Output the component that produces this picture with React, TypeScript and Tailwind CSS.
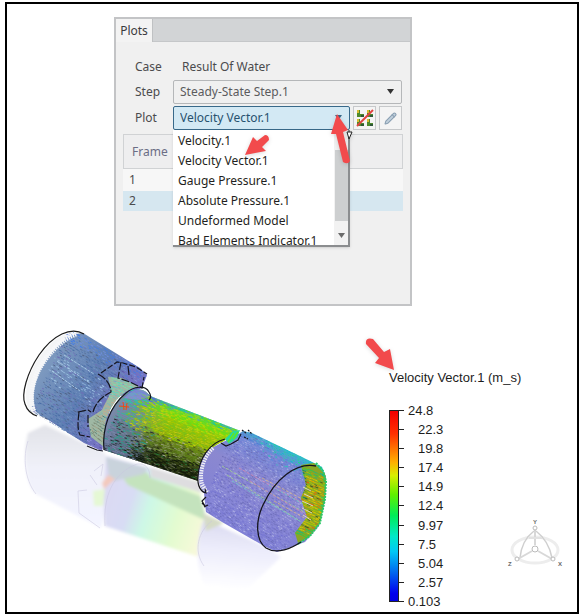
import React from 'react';
import { Pencil } from 'lucide-react';

const PLOTS = [
  'Velocity.1',
  'Velocity Vector.1',
  'Gauge Pressure.1',
  'Absolute Pressure.1',
  'Undeformed Model',
  'Bad Elements Indicator.1',
];

const LEGEND = ['24.8', '22.3', '19.8', '17.4', '14.9', '12.4', '9.97', '7.5', '5.04', '2.57', '0.103'];

type Point = [number, number];
type Dash = { x: number; y: number; dx: number; dy: number; color: string; width: number };

// Small seeded generator so the vector field is the same on every render
const makeRandom = (seed: number) => () => {
  seed = (seed * 1664525 + 1013904223) % 4294967296;
  return seed / 4294967296;
};

// Fills the quad [topLeft, topRight, bottomLeft, bottomRight] with rows of short vectors
const makeField = (
  quad: Point[],
  rows: number,
  cols: number,
  length: number,
  seed: number,
  pick: (u: number, v: number, r: number) => string,
): Dash[] => {
  const random = makeRandom(seed);
  const [tl, tr, bl, br] = quad;
  const dashes: Dash[] = [];
  for (let i = 0; i < rows; i++) {
    for (let j = 0; j < cols; j++) {
      const v = (i + random() * 0.5) / rows;
      const u = (j + (i % 2) * 0.5 + random() * 0.3) / cols;
      const at = (k: 0 | 1) =>
        tl[k] * (1 - u) * (1 - v) + tr[k] * u * (1 - v) + bl[k] * (1 - u) * v + br[k] * u * v;
      const dirX = (tr[0] - tl[0]) * (1 - v) + (br[0] - bl[0]) * v;
      const dirY = (tr[1] - tl[1]) * (1 - v) + (br[1] - bl[1]) * v;
      const norm = Math.hypot(dirX, dirY);
      const len = length * (0.6 + random() * 0.8);
      // jitter the colour lookup so neighbouring bands blend into each other
      const ju = u + (random() - 0.5) * 0.22;
      const jv = v + (random() - 0.5) * 0.12;
      dashes.push({
        x: at(0),
        y: at(1),
        dx: (dirX / norm) * len,
        dy: (dirY / norm) * len,
        color: pick(ju, jv, random()),
        width: 0.6 + random() * 0.5,
      });
    }
  }
  return dashes;
};

const inletField = makeField([[68, 328], [150, 372], [28, 412], [106, 454]], 42, 26, 2.4, 7, (u, v, r) => {
  if (v < 0.1) return r < 0.6 ? '#3f7ae8' : '#6f8fe0';
  if (u > 0.74) return r < 0.5 ? '#7367cf' : r < 0.75 ? '#5a54a6' : '#8e90dc';
  if (v > 0.35 && v < 0.55 && r < 0.35) return '#a2c6e6';
  return r < 0.4 ? '#4a6da6' : r < 0.7 ? '#7391be' : r < 0.85 ? '#6d6fb6' : '#526488';
});

const pipeField = makeField([[128, 386], [240, 427], [98, 448], [202, 484]], 42, 48, 3.2, 19, (u, v, r) => {
  if (v < 0.05) return u < 0.3 ? '#506de0' : r < 0.6 ? '#1fc99a' : '#4f9fd0';
  if (v < 0.22) return u < 0.18 ? (r < 0.5 ? '#6f7edc' : '#26c4b4') : r < 0.5 ? '#63df18' : '#b4dd05';
  if (v < 0.5) return u < 0.18 ? (r < 0.5 ? '#7186b5' : '#39b59a') : r < 0.45 ? '#a5c800' : r < 0.75 ? '#7bc51a' : '#c9cf13';
  if (u < 0.3) return r < 0.35 ? '#617192' : r < 0.5 ? '#292f39' : r < 0.8 ? '#7781aa' : '#23a28d';
  if (v < 0.74) return r < 0.4 ? '#60841d' : r < 0.65 ? '#829457' : r < 0.85 ? '#414d20' : '#a2aa94';
  return r < 0.5 ? '#11190c' : r < 0.75 ? '#37451a' : r < 0.9 ? '#656d52' : '#257038';
});

const outletField = makeField([[234, 424], [328, 468], [200, 508], [282, 554]], 44, 36, 2, 31, (u, v, r) => {
  if (v < 0.06) return u < 0.4 ? '#4f73d8' : r < 0.5 ? '#14b9cc' : '#1ed690';
  if (v < 0.15 && u > 0.4) return r < 0.5 ? '#30c5b2' : '#548bdc';
  return r < 0.3 ? '#6e6fba' : r < 0.6 ? '#9090da' : r < 0.8 ? '#adafe3' : '#7272d0';
});

const jetField = makeField([[298, 464], [327, 475], [284, 528], [318, 544]], 28, 12, 4, 43, (u, v, r) => {
  if (v < 0.08 || v > 0.88) return r < 0.5 ? '#16b98b' : '#39c93b';
  if (u < 0.25) return r < 0.3 ? '#127b78' : r < 0.6 ? '#26a577' : r < 0.8 ? '#8b8ad4' : '#334868';
  if (u > 0.9) return '#2ad45f';
  return r < 0.35 ? '#dcc400' : r < 0.6 ? '#a1c800' : r < 0.75 ? '#d39a00' : r < 0.92 ? '#4c5a1c' : '#e26308';
});

const throatField = makeField([[111, 376], [138, 384], [88, 432], [104, 444]], 24, 12, 2.4, 57, (u, v, r) => {
  if (v < 0.3) return r < 0.5 ? '#79dfb1' : r < 0.8 ? '#52d8c4' : '#74a6c8';
  if (v < 0.65) return r < 0.4 ? '#c6a991' : r < 0.7 ? '#8fc5a4' : '#72b8bd';
  return r < 0.5 ? '#7d8b76' : r < 0.8 ? '#a59d83' : '#4c7d79';
});

const INLET =
  'M83 332 C72 328 57 334 44 350 C31 366 23 388 27 403 C29 409 32 412 37 414 L84 442 L102 450 L112 398 L142 387 L147 374 L140 367 Z';
const PIPE = 'M104 449 C102 428 109 405 126 392 C132 387 144 386 150 395 L238 429 L224 440 C207 447 198 462 198 480 L150 464 Z';
const OUTLET =
  'M225 440 L234 436 L243 430 L252 432 L302 456 L322 466 L326 476 L325 500 L319 525 L305 541 L277 551 L264 545 L222 521 L206 511 L204 492 C195 478 197 462 208 449 Z';
const THROAT = 'M108 376 L122 377 L139 386 C125 387 110 401 105 424 L104 446 L91 436 L88 418 L102 409 L111 391 Z';
const JET = 'M301 464 L314 462 L325 473 L326 480 L325 498 L320 522 L309 536 L298 542 L295 532 L307 516 L301 497 L306 484 Z';

const Field: React.FC<{ dashes: Dash[] }> = ({ dashes }) => (
  <>
    {dashes.map((d, i) => (
      <path
        key={i}
        d={`M${d.x.toFixed(1)} ${d.y.toFixed(1)}l${d.dx.toFixed(1)} ${d.dy.toFixed(1)}`}
        stroke={d.color}
        strokeWidth={d.width}
      />
    ))}
  </>
);

const FlowModel: React.FC = () => (
  <svg className="w-[343px] shrink-0" viewBox="7 306 343 304" fill="none" role="img" aria-label="Velocity vectors in the pipe">
    <defs>
      <linearGradient id="inlet" gradientUnits="userSpaceOnUse" x1="50" y1="350" x2="135" y2="405">
        <stop offset="0" stopColor="#7f9bc0" />
        <stop offset="0.5" stopColor="#5e7fb4" />
        <stop offset="1" stopColor="#7a71c4" />
      </linearGradient>
      <linearGradient id="pipe" gradientUnits="userSpaceOnUse" x1="190" y1="409" x2="166" y2="470">
        <stop offset="0" stopColor="#35c789" />
        <stop offset="0.15" stopColor="#8fd60c" />
        <stop offset="0.45" stopColor="#87a812" />
        <stop offset="0.75" stopColor="#425217" />
        <stop offset="1" stopColor="#0b1206" />
      </linearGradient>
      <linearGradient id="pipeShade" gradientUnits="userSpaceOnUse" x1="103" y1="420" x2="160" y2="442">
        <stop offset="0" stopColor="#7b87b8" />
        <stop offset="0.5" stopColor="#6d87a0" stopOpacity="0.7" />
        <stop offset="1" stopColor="#6d87a0" stopOpacity="0" />
      </linearGradient>
      <linearGradient id="outlet" gradientUnits="userSpaceOnUse" x1="285" y1="447" x2="240" y2="530">
        <stop offset="0" stopColor="#2ebfc9" />
        <stop offset="0.12" stopColor="#7188d6" />
        <stop offset="0.4" stopColor="#8b88d0" />
        <stop offset="1" stopColor="#8080d6" />
      </linearGradient>
      <linearGradient id="fadeLeft" gradientUnits="userSpaceOnUse" x1="60" y1="430" x2="60" y2="520">
        <stop offset="0" stopColor="#e3e4ea" />
        <stop offset="0.4" stopColor="#f0f1f9" />
        <stop offset="1" stopColor="#f3f4ff" />
      </linearGradient>
      <linearGradient id="fadeMiddle" gradientUnits="userSpaceOnUse" x1="105" y1="490" x2="210" y2="525">
        <stop offset="0" stopColor="#dbd9f3" />
        <stop offset="0.25" stopColor="#d8dcf4" />
        <stop offset="0.42" stopColor="#cdf8e6" />
        <stop offset="0.7" stopColor="#e3fbd0" />
        <stop offset="1" stopColor="#fbf8dc" />
      </linearGradient>
      <linearGradient id="fadeRight" gradientUnits="userSpaceOnUse" x1="230" y1="515" x2="225" y2="588">
        <stop offset="0" stopColor="#d7d7ee" />
        <stop offset="0.5" stopColor="#eeeefc" />
        <stop offset="1" stopColor="#ffffff" />
      </linearGradient>
      <filter id="soft" x="-20%" y="-20%" width="140%" height="140%">
        <feGaussianBlur stdDeviation="1.5" />
      </filter>
      <clipPath id="inletClip"><path d={INLET} /></clipPath>
      <clipPath id="pipeClip"><path d={PIPE} /></clipPath>
      <clipPath id="outletClip"><path d={OUTLET} /></clipPath>
      <clipPath id="throatClip"><path d={THROAT} /></clipPath>
      <clipPath id="jetClip"><path d={JET} /></clipPath>
    </defs>

    {/* Reflection on the floor */}
    <g filter="url(#soft)">
      <path d="M28 432 L45 424 L105 452 L112 480 L101 527 L36 493 C24 483 23 450 28 432 Z" fill="url(#fadeLeft)" />
      <path d="M106 455 L198 480 L204 510 L199 556 L105 525 C103 500 104 480 106 455 Z" fill="url(#fadeMiddle)" />
      <path d="M118 470 C135 462 148 470 151 477 L200 495 L207 520 L128 484 Z" fill="#c4e3bd" />
      <path d="M150 466 L199 481 L202 492 L151 476 Z" fill="#dedde0" />
      <path d="M106 456 L147 467 L144 473 L110 481 Z" fill="#c9d3dc" />
      <path d="M108 474 L115 478 L104 488 L102 482 Z" fill="#f3c9bd" />
      <path d="M93 490 L105 488 L103 505 L94 505 Z" fill="#e5f8d4" />
      <path d="M204 518 L268 547 L281 556 L262 574 L245 590 L205 585 C196 570 195 540 204 518 Z" fill="url(#fadeRight)" />
      <path d="M203 512 L224 522 L206 530 Z" fill="#d5dbc6" />
    </g>
    <g stroke="#c8c6df" strokeWidth="0.9" opacity="0.6">
      <path d="M28 440 C23 455 24 478 36 493" />
      <path d="M105 525 C103 495 113 472 137 463 C146 462 150 468 150 477" />
      <path d="M78 490 L79 512 L100 527 M78 490 L87 489 M94 470 L103 463 L101 475 M90 474 L97 484" />
      <path d="M204 565 C193 550 198 530 212 520" />
    </g>

    {/* Inlet */}
    <path d="M83 332 C72 328 57 334 44 350 C31 366 23 388 27 403 C29 409 32 412 37 414 L47 418 L88 335 Z" fill="#f4f5f6" />
    <path d="M76 333 C62 339 49 352 40 370 C34 383 31 397 36 411 L84 442 L102 450 L112 398 L142 387 L147 374 L140 367 L83 332 Z" fill="url(#inlet)" />
    <g clipPath="url(#inletClip)"><Field dashes={inletField} /></g>
    <path
      d="M76 333 C62 338 48 352 38 370 C32 383 29 397 34 411"
      stroke="#f7f8fa"
      strokeWidth="5"
      strokeDasharray="1.4 1"
    />
    <path d="M84 333 C71 325 53 334 39 354 C27 372 21 393 25 403 C27 409 31 413 37 415" stroke="#1c1c1c" strokeWidth="1.2" />
    <path d="M57 360 L90 382 M64 354 L94 373 M52 370 L80 390" stroke="#b6d6ee" strokeWidth="1" strokeDasharray="3 1" opacity="0.8" />

    {/* Throat between inlet and pipe */}
    <path d={THROAT} fill="#9fb8a4" />
    <g clipPath="url(#throatClip)"><Field dashes={throatField} /></g>
    <g stroke="#15151f" strokeWidth="1.2">
      <path d="M98 373 C106 377 111 384 111 391 C101 396 95 403 93 411" strokeDasharray="9 1.5" />
      <path d="M101 372 L117 361 L123 362 L136 366 L147 373" strokeDasharray="6 2" />
      <path d="M121 361 L118 377 L130 381 L142 387 L144 376" strokeDasharray="8 2" />
      <path d="M78 411 L88 409 L91 411 M79 411 C78 420 77 428 80 434 L90 436 M88 414 L88 426" strokeDasharray="8 2" />
      <path d="M87 445 L97 449 L103 450 M128 365 L129 374" />
    </g>

    {/* Pipe */}
    <path d={PIPE} fill="url(#pipe)" />
    <path d={PIPE} fill="url(#pipeShade)" />
    <g clipPath="url(#pipeClip)"><Field dashes={pipeField} /></g>
    <path d="M131 391 C139 386 147 389 149 396 L138 399 L124 397 Z" fill="#8f90dc" opacity="0.6" />
    <path d="M123 401 L124 409 M119 405 L129 406 M127 402 L126 409" stroke="#ee4a16" strokeWidth="1" />
    <path d="M104 449 C102 428 109 406 126 392 C134 385 145 384 149 391 C151 394 151 397 149 399" stroke="#12161c" strokeWidth="1.2" />

    {/* Outlet */}
    <path d={OUTLET} fill="url(#outlet)" />
    <g clipPath="url(#outletClip)"><Field dashes={outletField} /></g>
    <path d="M225 438 L233 430 L240 429 L237 437 L229 443 Z" fill="#29d99a" />
    <path d="M228 441 L234 432 M233 438 L238 431" stroke="#63e522" strokeWidth="1.5" />
    <g strokeWidth="1" strokeDasharray="3 1.5" opacity="0.75">
      <path d="M222 465 L304 511 M227 474 L300 520" stroke="#a9dc8b" />
      <path d="M239 467 L308 505 M250 480 L308 515" stroke="#d98bb0" />
      <path d="M232 480 L303 522 M269 484 L310 507" stroke="#73d3c8" />
      <path d="M262 477 L306 500 M274 500 L310 520" stroke="#e1bd83" />
    </g>
    <path d={JET} fill="#88a626" />
    <g clipPath="url(#jetClip)"><Field dashes={jetField} /></g>
    <path
      d="M316 462 L323 470 L326 480 L325 498 L320 522 L310 535 L298 543"
      stroke="#27c967"
      strokeWidth="2"
      strokeDasharray="2 1"
    />
    <g stroke="#e0d6bb" strokeWidth="1">
      <path d="M303 486 L311 490 M304 493 L313 497 M302 500 L313 505 M302 507 L312 512 M303 514 L311 519" />
    </g>
    <path d="M316 465 C296 461 275 478 263 504 C255 521 256 540 266 547 C277 554 292 547 301 541" stroke="#15151d" strokeWidth="1.3" />
    <path d="M213 447 C203 456 199 472 202 483 L207 492" stroke="#f0f0f4" strokeWidth="4" strokeDasharray="1.5 1" />
    <g stroke="#16161c" strokeWidth="1.2">
      <path d="M225 438 C209 442 199 458 198 475 C197 485 201 491 206 492 L205 488" />
      <path d="M221 442 L226 445 L231 443 L238 439 L241 433 M206 496 L202 500 L205 505 L202 502 M204 506 L208 504" />
      <path d="M242 429 L246 432 M244 436 L248 438 M248 429 L252 433" strokeDasharray="2 1" />
    </g>
  </svg>
);

const AxisTriad: React.FC = () => (
  <svg className="w-[60px] h-[56px]" viewBox="0 0 60 56" fill="none" role="img" aria-label="Axes">
    <ellipse cx="30" cy="32" rx="23" ry="13" stroke="#ededed" strokeWidth="3" />
    <path d="M29 13 C21 19 16 29 15 40 M31 13 C40 20 45 29 47 40" stroke="#cfcfcf" strokeWidth="1.5" />
    <path d="M30 10 L30 27 M27 33 L13 41 M33 33 L47 41" stroke="#d8d8d8" strokeWidth="2" />
    <path d="M24 20 H37" stroke="#e2e2e2" strokeWidth="2" />
    <circle cx="30" cy="31" r="3" fill="#fff" stroke="#bbb" />
    <circle cx="30" cy="10" r="2" fill="#fff" stroke="#bbb" />
    <circle cx="12" cy="41" r="2" fill="#fff" stroke="#bbb" />
    <circle cx="48" cy="41" r="2" fill="#fff" stroke="#bbb" />
    <g fill="#666" fontFamily="Liberation Sans, sans-serif" fontSize="6" fontWeight="bold">
      <text x="28" y="6">Y</text>
      <text x="3" y="48">Z</text>
      <text x="53" y="48">X</text>
    </g>
  </svg>
);

const MeshIcon: React.FC = () => (
  <svg className="w-[18px] h-[18px]" viewBox="0 0 18 18" fill="none" aria-hidden="true">
    <path d="M1 1 H4 V5 H8 V8 H1 Z M11 1 H14 V5 H17 V8 H11 Z M1 10 H4 V14 H8 V17 H1 Z M11 10 H14 V14 H17 V17 H11 Z" fill="#4f8a2b" />
    <path d="M1 1 H3 V4 H1 Z M11 1 H13 V4 H11 Z M1 10 H3 V13 H1 Z M11 10 H13 V13 H11 Z" fill="#d8bd30" />
    <path d="M5 6 H8 V8 H5 Z M14 6 H17 V8 H14 Z M5 15 H8 V17 H5 Z M14 15 H17 V17 H14 Z" fill="#2d5736" />
    <path d="M17 1 L1 17" stroke="#e04440" strokeWidth="2" />
  </svg>
);

const Caret: React.FC = () => (
  <svg className="w-[7px] h-[5px]" viewBox="0 0 7 5" aria-hidden="true">
    <path d="M0 0 H7 L3.5 5 Z" fill="currentColor" />
  </svg>
);

const PlotsPanel: React.FC = () => (
  <section className="ml-[107px] mt-[13px] h-[289px] w-full max-w-[298px] border-2 border-[#c3c4c6] bg-[#f0f0f0] font-['Noto_Sans',sans-serif] text-[12px] text-[#4b4b4d]">
    <div className="flex h-[23px] border-b border-[#c5c7c9] bg-[#d2d4d6]" role="tablist">
      <button type="button" role="tab" aria-selected="true" className="-mb-px w-[37px] border-r border-[#bfc1c3] bg-[#f3f3f3] text-center text-[#3b3b3d]">
        Plots
      </button>
    </div>

    <div className="pl-[19px] pr-2 pt-[13px]">
      <div className="flex h-[24px] items-center">
        <span className="w-[47px]">Case</span>
        <span>Result Of Water</span>
      </div>

      <div className="flex h-[26px] items-center">
        <label htmlFor="step" className="w-[38px]">Step</label>
        <div className="relative flex-1">
          <select id="step" className="block h-[24px] w-full appearance-none rounded-[2px] border border-[#b5b7b9] bg-[#f0f0f0] pl-[6px] text-[#5b5b5d]">
            <option>Steady-State Step.1</option>
          </select>
          <span className="pointer-events-none absolute right-2 top-[9px] text-[#333]"><Caret /></span>
        </div>
      </div>

      <div className="flex h-[26px] items-center">
        <label htmlFor="plot" className="w-[38px]">Plot</label>
        <div className="relative flex-1">
          <select id="plot" defaultValue="Velocity Vector.1" className="block h-[24px] w-full appearance-none rounded-[2px] border border-[#38698a] bg-[#d3e9f4] pl-[6px] text-[#28526f]">
            {PLOTS.map((plot) => (
              <option key={plot}>{plot}</option>
            ))}
          </select>
          <span className="pointer-events-none absolute right-2 top-[9px] text-[#38698a]"><Caret /></span>

          {/* Open list */}
          <div className="absolute left-0 right-0 top-[24px] z-10 flex h-[117px] border-b-2 border-r-2 border-[#8b8d8f] bg-white shadow-sm">
            <ul role="listbox" aria-label="Plot" className="flex-1 overflow-hidden pl-[5px] pt-px leading-[20px] text-[#1f1f21]">
              {PLOTS.map((plot) => (
                <li key={plot} role="option" aria-selected={plot === 'Velocity Vector.1'} className="whitespace-nowrap">
                  {plot}
                </li>
              ))}
            </ul>
            <div className="flex w-[14px] flex-col items-center bg-[#f2f2f2] text-[#6b6b6b]">
              <span className="h-[20px]" />
              <span className="w-[13px] flex-1 bg-[#cdcfd0]" />
              <span className="flex h-[24px] items-center pt-[5px]"><Caret /></span>
            </div>
          </div>
        </div>
        <button type="button" aria-label="Hide mesh" className="ml-[3px] flex h-[24px] w-[23px] items-center justify-center border border-[#c6c8ca] bg-[#f4f4f4]">
          <MeshIcon />
        </button>
        <button type="button" aria-label="Edit plot" className="ml-[3px] flex h-[24px] w-[23px] items-center justify-center border border-[#c6c8ca] bg-[#f4f4f4]">
          <Pencil size={13} color="#8a9fb2" fill="#c1d0dc" strokeWidth={2} />
        </button>
      </div>
    </div>

    <div className="mt-[3px] pl-[7px] pr-[7px]">
      <table className="w-full border-separate border-spacing-0 text-left">
        <thead>
          <tr>
            <th className="h-[35px] border border-[#d0d2d4] bg-[#eeeeef] pl-2 font-normal text-[#6b6d85]">Frame</th>
          </tr>
        </thead>
        <tbody>
          <tr><td className="h-[22px] bg-[#f7f7f7] pl-[6px]">1</td></tr>
          <tr><td className="h-[20px] bg-[#d6e7f0] pl-[6px]">2</td></tr>
        </tbody>
      </table>
    </div>
  </section>
);

const Legend: React.FC = () => (
  <div className="ml-[39px] pt-[63px] font-['Liberation_Sans',sans-serif] text-[13px] leading-[17px] text-[#1d1d1d]">
    <h2 className="whitespace-nowrap">Velocity Vector.1 (m_s)</h2>
    <div className="mt-[16px] flex">
      <div className="my-[8px] w-[10px] border border-[#222] bg-[linear-gradient(to_bottom,#f40000_0%,#ff3000_12%,#ffb000_27%,#d8ef00_34%,#60f000_44%,#00ec58_55%,#00e8c8_66%,#00c8f5_74%,#0070f0_84%,#0000ee_96%,#0000e0_100%)]" />
      <ul className="flex h-[208px] flex-col justify-between">
        {LEGEND.map((value, i) => (
          <li key={value} className="flex items-center">
            <span className="h-px w-[5px] bg-[#222]" />
            <span className={i === 0 || i === LEGEND.length - 1 ? 'pl-[4px]' : 'pl-[14px]'}>{value}</span>
          </li>
        ))}
      </ul>
    </div>
  </div>
);

const App: React.FC = () => {
  return (
    <main className="bg-white pb-px pl-[5px] pr-[2px] pt-[2px]">
      <div className="relative overflow-hidden border-2 border-black">
        <PlotsPanel />

        <div className="flex h-[306px]">
          <FlowModel />
          <Legend />
          <div className="-ml-4 mt-[212px] shrink-0"><AxisTriad /></div>
        </div>

        {/* Callout arrows */}
        <svg className="absolute left-[238px] top-[128px] z-20 h-[25px] w-[26px] drop-shadow-sm" viewBox="0 0 26 25" aria-hidden="true">
          <path d="M0 23 L8 5 L12 9 L20 3 Q24 3 24 8 L17 15 L21 19 Z" fill="#f24a4c" />
        </svg>
        <svg className="absolute left-[322px] top-[108px] z-20 h-[57px] w-[30px] drop-shadow-sm" viewBox="0 0 30 57" aria-hidden="true">
          <path d="M18 20 L23 20 L20 27 Z" fill="#fff" stroke="#222" strokeWidth="1" />
          <path d="M8 2 L19 18 L14 20 L21 49 Q19 53 14 50 L7 22 L2 22 Z" fill="#f24a4c" />
        </svg>
        <svg className="absolute left-[357px] top-[330px] z-20 h-[38px] w-[32px] drop-shadow-sm" viewBox="0 0 32 38" aria-hidden="true">
          <path d="M2 10 Q1 3 9 5 L20 18 L26 15 L30 36 L11 29 L15 24 Z" fill="#f24a4c" />
        </svg>
      </div>
    </main>
  );
};

export default App;
